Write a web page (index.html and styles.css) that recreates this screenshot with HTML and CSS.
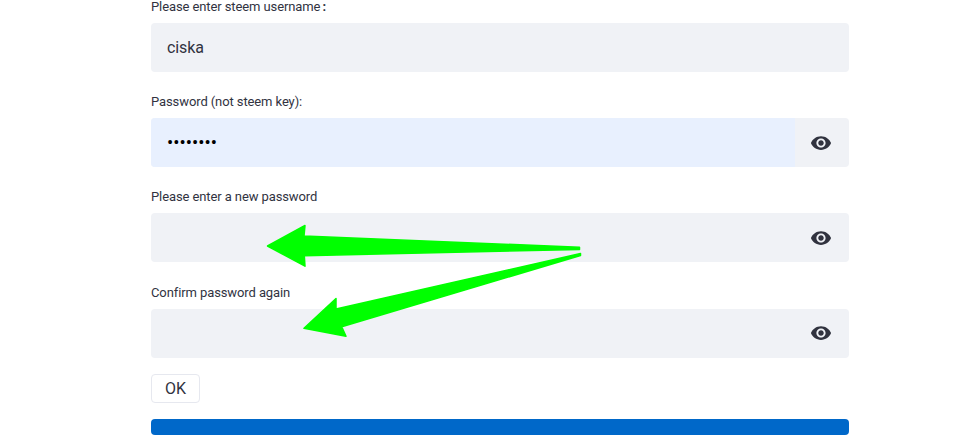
FILE: index.html
```html
<!DOCTYPE html>
<html lang="en">
<head>
<meta charset="utf-8">
<title>Change password</title>
<link rel="stylesheet" href="styles.css">
</head>
<body>
<main class="form">
  <div class="field">
    <label class="label" for="user">Please enter steem username<span class="colon">:</span></label>
    <div class="box"><input class="input" id="user" type="text" value="ciska"></div>
  </div>
  <div class="field">
    <label class="label" for="old">Password (not steem key):</label>
    <div class="box">
      <input class="input input-filled" id="old" type="password" value="12345678">
      <span class="eye"><svg viewBox="0 0 24 24" width="22" height="22"><path d="M12 4.5C7 4.5 2.73 7.61 1 12c1.73 4.39 6 7.5 11 7.5s9.27-3.11 11-7.5c-1.73-4.39-6-7.5-11-7.5zM12 17c-2.76 0-5-2.24-5-5s2.24-5 5-5 5 2.24 5 5-2.24 5-5 5zm0-8c-1.66 0-3 1.34-3 3s1.34 3 3 3 3-1.34 3-3-1.34-3-3-3z"/></svg></span>
    </div>
  </div>
  <div class="field">
    <label class="label" for="new">Please enter a new password</label>
    <div class="box">
      <input class="input" id="new" type="password">
      <span class="eye"><svg viewBox="0 0 24 24" width="22" height="22"><path d="M12 4.5C7 4.5 2.73 7.61 1 12c1.73 4.39 6 7.5 11 7.5s9.27-3.11 11-7.5c-1.73-4.39-6-7.5-11-7.5zM12 17c-2.76 0-5-2.24-5-5s2.24-5 5-5 5 2.24 5 5-2.24 5-5 5zm0-8c-1.66 0-3 1.34-3 3s1.34 3 3 3 3-1.34 3-3-1.34-3-3-3z"/></svg></span>
    </div>
  </div>
  <div class="field">
    <label class="label" for="again">Confirm password again</label>
    <div class="box">
      <input class="input" id="again" type="password">
      <span class="eye"><svg viewBox="0 0 24 24" width="22" height="22"><path d="M12 4.5C7 4.5 2.73 7.61 1 12c1.73 4.39 6 7.5 11 7.5s9.27-3.11 11-7.5c-1.73-4.39-6-7.5-11-7.5zM12 17c-2.76 0-5-2.24-5-5s2.24-5 5-5 5 2.24 5 5-2.24 5-5 5zm0-8c-1.66 0-3 1.34-3 3s1.34 3 3 3 3-1.34 3-3-1.34-3-3-3z"/></svg></span>
    </div>
  </div>
  <button class="ok" type="button">OK</button>
  <div class="bar"></div>
</main>
<svg class="arrows" viewBox="0 0 976 439" width="976" height="439" aria-hidden="true">
  <polygon points="267.5,246 305,225.5 304,236 579.5,247.3 579.5,249.5 304.3,255.7 305,266.2"/>
  <polygon points="580.5,253.5 580.5,255.5 341.7,326.7 346,336.2 304,328.3 336,298.5 336,309"/>
</svg>
</body>
</html>
```

FILE: styles.css
```css
* {
  box-sizing: border-box;
}
html, body {
  margin: 0;
  height: 439px;
  overflow: hidden;
  background: #fff;
}
body {
  position: relative;
  font-family: "Roboto", "Liberation Sans", sans-serif;
  color: #31333f;
}
.form {
  width: 698px;
  margin: -2.3px 0 0 151px;
  display: flex;
  flex-direction: column;
}
.field {
  display: flex;
  flex-direction: column;
  gap: 8px;
  height: 95.33px;
}
.label {
  font-size: 13px;
  letter-spacing: -0.1px;
  line-height: 17px;
  height: 17px;
}
.colon {
  font-weight: 700;
  margin-left: 2px;
}
.box {
  display: flex;
  height: 49px;
  background: #f0f2f6;
  border-radius: 4px;
  overflow: hidden;
}
.input {
  flex: 1;
  min-width: 0;
  height: 100%;
  border: 0;
  outline: 0;
  padding: 0 16px;
  background: transparent;
  font: 16px "Roboto", "Liberation Sans", sans-serif;
  letter-spacing: -0.1px;
  color: #31333f;
}
.input-filled {
  background: #e8f0fe;
  color: #000;
  font-size: 18.5px;
  letter-spacing: 0;
}
.eye {
  flex: 0 0 54px;
  padding-right: 2px;
  display: flex;
  align-items: center;
  justify-content: center;
}
.eye svg {
  fill: #31333f;
}
.ok {
  align-self: flex-start;
  width: 49px;
  height: 29px;
  margin-top: -5px;
  padding: 0;
  background: #fff;
  border: 1px solid #e6e8ef;
  border-radius: 4px;
  font: 16px "Roboto", "Liberation Sans", sans-serif;
  color: #31333f;
}
.bar {
  height: 16px;
  margin-top: 16px;
  background: #0068c9;
  border-radius: 4px;
}
.arrows {
  position: absolute;
  left: 0;
  top: 0;
  pointer-events: none;
}
.arrows polygon {
  fill: #00ff00;
  stroke: #00ff00;
  stroke-width: 1.5;
  stroke-linejoin: round;
}
```
